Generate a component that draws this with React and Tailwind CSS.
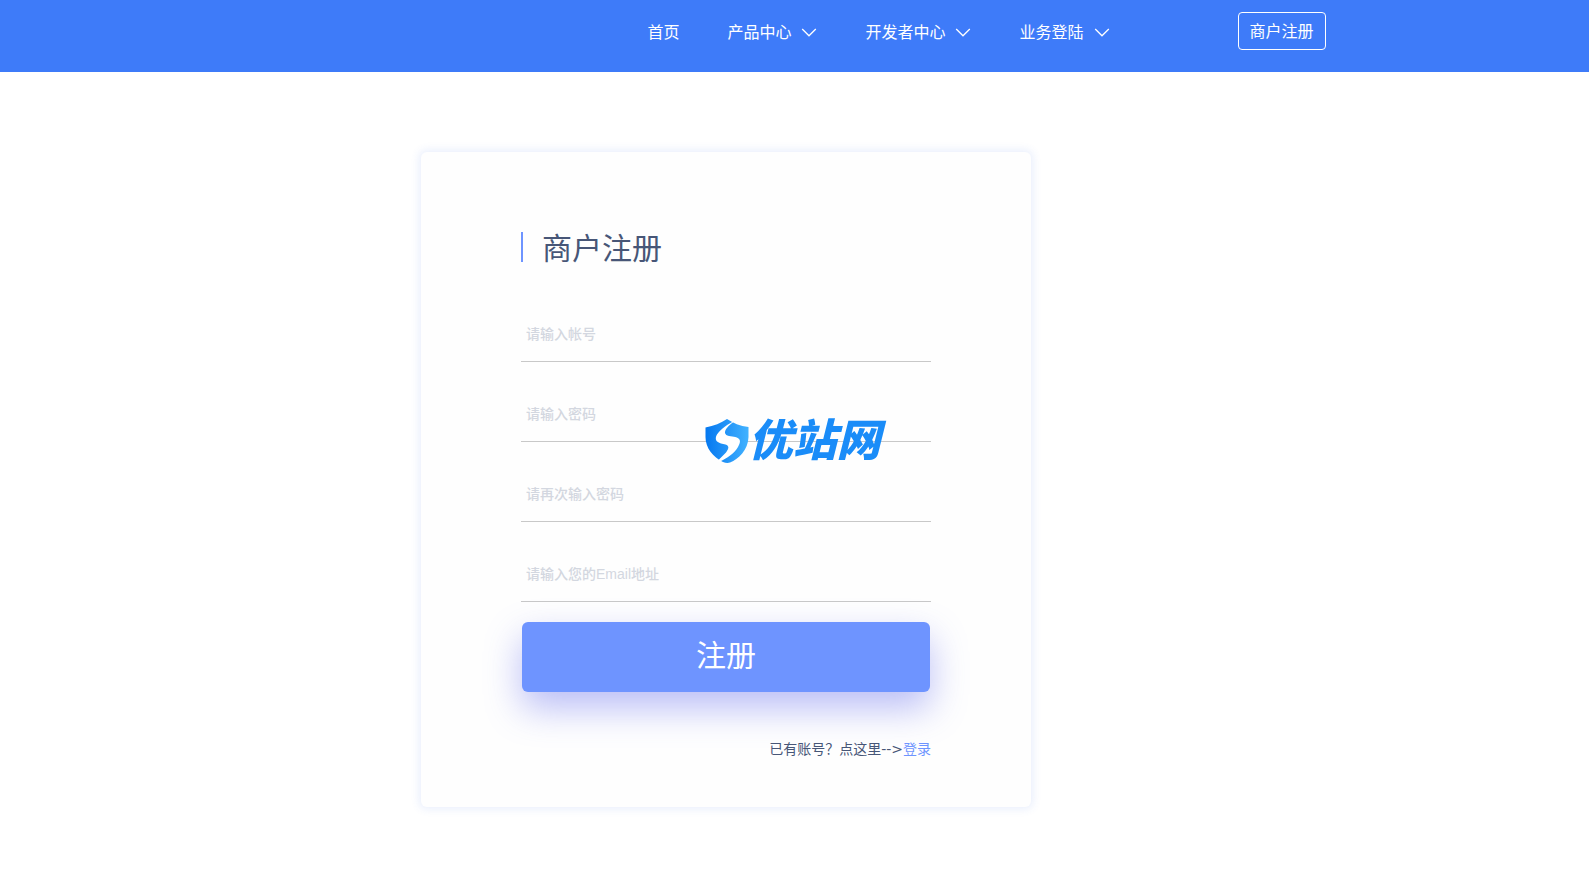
import React, { useState } from "react";

const navItems = [
  { label: "首页", hasMenu: false },
  { label: "产品中心", hasMenu: true },
  { label: "开发者中心", hasMenu: true },
  { label: "业务登陆", hasMenu: true },
];

const fields = [
  { name: "username", type: "text", placeholder: "请输入帐号" },
  { name: "password", type: "password", placeholder: "请输入密码" },
  { name: "confirm", type: "password", placeholder: "请再次输入密码" },
  { name: "email", type: "email", placeholder: "请输入您的Email地址" },
];

const ChevronDown = () => (
  <svg className="h-4 w-4" viewBox="0 0 16 16" fill="none" stroke="currentColor" strokeWidth="1.3" aria-hidden="true">
    <path d="M1.2 4 L8 10.8 L14.8 4" />
  </svg>
);

const Header = () => (
  <header className="bg-[#3e7bf9] text-white">
    <div className="mx-auto flex h-[72px] max-w-[1062px] items-start justify-end gap-32 pt-3">
      <nav className="flex h-[42px] items-center gap-12">
        {navItems.map((item) => (
          <a key={item.label} href="#" className="flex items-center gap-2.5 text-base">
            {item.label}
            {item.hasMenu && <ChevronDown />}
          </a>
        ))}
      </nav>
      <a
        href="#"
        className="flex h-[38px] w-[88px] items-center justify-center rounded border border-white pt-0.5 text-base"
      >
        商户注册
      </a>
    </div>
  </header>
);

// Site mark shown in the middle of the window
const Watermark = () => (
  <div className="pointer-events-none fixed inset-0 flex items-center justify-center">
    <div className="flex items-center pr-1">
      <svg className="h-11 w-11" viewBox="0 0 44 44" aria-hidden="true">
        <defs>
          <linearGradient id="shield" x1="0" y1="0" x2="1" y2="0">
            <stop offset="0" stopColor="#0578f0" />
            <stop offset="1" stopColor="#42b2ff" />
          </linearGradient>
        </defs>
        <path
          d="M22 0 C28 4 35 7 43.500 8 V18 C43 31 34 40 25 43.500 Q22 44.500 18 43 C8 38 0.5 29 0.5 18 V8.500 C9 7 16 4 22 0 Z"
          fill="url(#shield)"
        />
        <path
          d="M32 0.5 C23 4.500 15 11 12 15.500 C9.500 20 11 23 16 24.500 L20.500 25.500 C24.500 27 24 29.500 21 33.500 L11 43.500 L15 42.500 C22 39 29 35 33 28 C36.500 22 35.500 19 29 17.800 L24 17 C19.500 16 19 13 21.500 9.500 C24 6 28 3 32 0.5 Z"
          fill="#fff"
        />
      </svg>
      <span className="text-[44px] leading-none font-black text-[#1a8cf8] italic">优站网</span>
    </div>
  </div>
);

const App = () => {
  const [form, setForm] = useState({ username: "", password: "", confirm: "", email: "" });

  const handleChange = (e) => {
    const { name, value } = e.target;
    setForm((prev) => ({ ...prev, [name]: value }));
  };

  return (
    <div className="min-h-screen bg-white font-['Liberation_Sans','Noto_Sans_CJK_SC',sans-serif]">
      <Header />

      <main className="flex justify-center pt-20 pb-[74px] pr-[137px]">
        <form
          onSubmit={(e) => e.preventDefault()}
          className="w-full max-w-[610px] rounded-md bg-[#fefefe] px-[100px] pt-20 pb-12 shadow-[0_0_8px_2px_rgba(62,112,230,0.12)]"
        >
          <div className="mb-10 flex items-start gap-[19px]">
            <span className="h-[30px] w-0.5 bg-[#6e94ff]" />
            <h1 className="text-[30px] leading-[34px] text-[#475677]">商户注册</h1>
          </div>

          <div className="flex flex-col gap-6">
            {fields.map((field) => (
              <input
                key={field.name}
                name={field.name}
                type={field.type}
                value={form[field.name]}
                onChange={handleChange}
                placeholder={field.placeholder}
                aria-label={field.placeholder}
                className="h-14 w-full border-b border-[#c8c8c8] px-[5px] text-sm text-[#475677] outline-none placeholder:font-medium placeholder:text-[#d3d7e0]"
              />
            ))}
          </div>

          <div className="px-px pt-5">
            <button
              type="submit"
              className="h-[70px] w-full rounded-md bg-[#6e94ff] pb-1 text-[30px] text-white shadow-[0_16px_36px_rgba(83,92,236,0.4)]"
            >
              注册
            </button>
          </div>

          <p className="mt-[47px] text-right text-sm text-[#475677]">
            已有账号？点这里<span className="font-['DejaVu_Sans',sans-serif]">--&gt;</span>
            <a href="#" className="text-[#6e94ff]">登录</a>
          </p>
        </form>
      </main>

      <Watermark />
    </div>
  );
};

export default App;
